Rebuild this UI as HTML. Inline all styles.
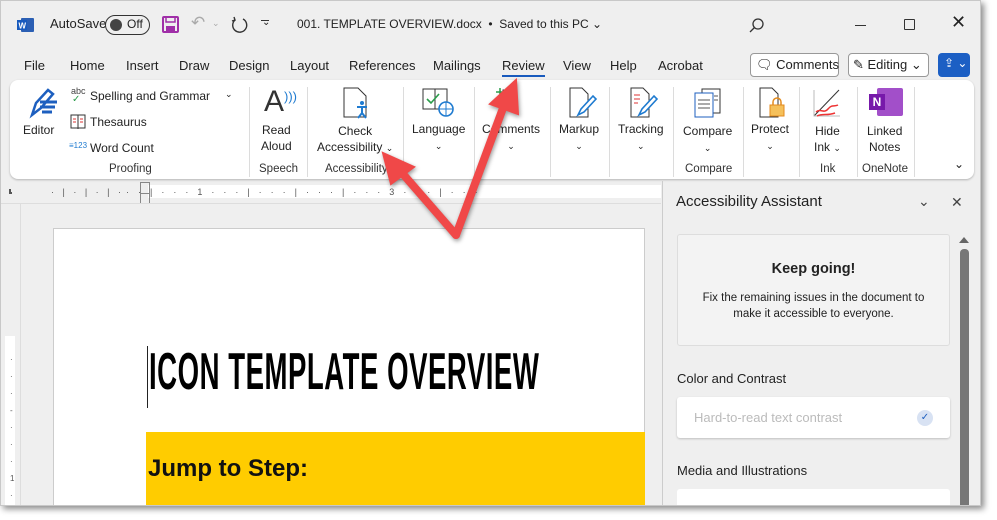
<!DOCTYPE html>
<html><head><meta charset="utf-8"><style>
*{margin:0;padding:0;box-sizing:border-box}
body{width:997px;height:520px;background:#fff;position:relative;overflow:hidden;font-family:"Segoe UI","Liberation Sans",sans-serif;color:#222}
.a{position:absolute;white-space:nowrap}
.win{position:absolute;left:0;top:0;width:981px;height:506px;background:#efefef;box-shadow:3px 3px 6px rgba(0,0,0,.45);border:1px solid #c8c8c8;overflow:hidden}
.t13{font-size:13px}
.t12{font-size:12px}
.sep{position:absolute;top:86px;width:1px;height:90px;background:#dcdcdc}
.lbl{position:absolute;font-size:11.5px;color:#333;text-align:center}
.btn{position:absolute;font-size:12px;text-align:center;line-height:16px;color:#222}
.ch{font-size:9px}
</style></head><body>
<div class="win">
<svg class="a" style="left:16px;top:16px" width="18" height="16"><rect x="4" y="1" width="13" height="14" rx="1" fill="#2b5fb4"/><rect x="0" y="3" width="10" height="10" fill="#185abd"/><text x="1.5" y="11.5" font-size="8" fill="#fff" font-family="Liberation Sans" font-weight="bold">W</text></svg>
<div class="a t13" style="left:49px;top:15px">AutoSave</div>
<div class="a" style="left:104px;top:14px;width:45px;height:20px;border:1.5px solid #333;border-radius:10px"></div>
<div class="a" style="left:109px;top:18px;width:12px;height:12px;border-radius:6px;background:#444"></div>
<div class="a t12" style="left:126px;top:16px">Off</div>
<svg class="a" style="left:161px;top:15px" width="18" height="18"><rect x="1" y="1" width="15" height="15" rx="1" fill="none" stroke="#a02fa8" stroke-width="2"/><rect x="4" y="1" width="9" height="5" fill="none" stroke="#a02fa8" stroke-width="1.5"/><rect x="4" y="10" width="9" height="6" fill="#a02fa8"/></svg>
<div class="a" style="left:190px;top:12px;font-size:17px;color:#aaa">↶</div>
<div class="a" style="left:211px;top:17px;font-size:9px;color:#aaa">⌄</div>
<svg class="a" style="left:228px;top:14px" width="20" height="20"><path d="M14 4 A7 7 0 1 1 6 5" fill="none" stroke="#333" stroke-width="1.4"/><path d="M5 2 L6 5 L3 6" fill="none" stroke="#333" stroke-width="1.4"/></svg>
<div class="a" style="left:261px;top:16px;font-size:10px">⌄</div>
<div class="a" style="left:260px;top:19px;width:8px;height:1px;background:#333"></div>
<div class="a t12" style="left:296px;top:16px">001. TEMPLATE OVERVIEW.docx &nbsp;•&nbsp; Saved to this PC ⌄</div>
<svg class="a" style="left:747px;top:16px" width="18" height="18"><circle cx="10" cy="7" r="5" fill="none" stroke="#333" stroke-width="1.3"/><path d="M6.5 10.5 L2 15" stroke="#333" stroke-width="1.3"/></svg>
<div class="a" style="left:854px;top:24px;width:11px;height:1px;background:#333"></div>
<div class="a" style="left:903px;top:18px;width:11px;height:11px;border:1.3px solid #333;border-radius:1px"></div>
<div class="a" style="left:950px;top:11px;font-size:18px;font-weight:300">✕</div>
<div class="a t13" style="left:23px;top:57px">File</div>
<div class="a t13" style="left:69px;top:57px">Home</div>
<div class="a t13" style="left:125px;top:57px">Insert</div>
<div class="a t13" style="left:178px;top:57px">Draw</div>
<div class="a t13" style="left:228px;top:57px">Design</div>
<div class="a t13" style="left:289px;top:57px">Layout</div>
<div class="a t13" style="left:348px;top:57px">References</div>
<div class="a t13" style="left:432px;top:57px">Mailings</div>
<div class="a t13" style="left:501px;top:57px">Review</div>
<div class="a" style="left:501px;top:74px;width:43px;height:2px;background:#185abd"></div>
<div class="a t13" style="left:562px;top:57px">View</div>
<div class="a t13" style="left:609px;top:57px">Help</div>
<div class="a t13" style="left:657px;top:57px">Acrobat</div>
<div class="a" style="left:749px;top:52px;width:89px;height:24px;border:1px solid #999;border-radius:4px;background:#fff"></div>
<div class="a t13" style="left:755px;top:56px">🗨︎ Comments</div>
<div class="a" style="left:847px;top:52px;width:81px;height:24px;border:1px solid #999;border-radius:4px;background:#fff"></div>
<div class="a t13" style="left:852px;top:56px">✎ Editing ⌄</div>
<div class="a" style="left:937px;top:52px;width:32px;height:24px;border-radius:4px;background:#1c5fc4"></div>
<div class="a" style="left:943px;top:55px;font-size:12px;color:#fff">⇪ ⌄</div>
<div class="a" style="left:9px;top:79px;width:964px;height:99px;background:#fff;border-radius:8px;box-shadow:0 1px 2px rgba(0,0,0,.25)"></div>
<svg class="a" style="left:25px;top:86px" width="34" height="32"><path d="M6 28 L10 16 L22 3 L27 7 L15 21 Z" fill="none" stroke="#1d5fbf" stroke-width="2.5"/><path d="M14 15 h17 M14 20 h15 M16 25 h10" stroke="#1d5fbf" stroke-width="3"/></svg>
<div class="btn" style="left:22px;top:121px">Editor</div>
<div class="a" style="left:70px;top:85px;font-size:9px;color:#444">abc</div>
<div class="a" style="left:71px;top:93px;font-size:10px;color:#2a9d4a">✓</div>
<div class="a t12" style="left:89px;top:88px">Spelling and Grammar</div>
<div class="a ch" style="left:224px;top:88px">⌄</div>
<svg class="a" style="left:69px;top:113px" width="16" height="16"><rect x="1" y="1" width="14" height="13" fill="none" stroke="#333"/><path d="M8 1 v14" stroke="#333"/><path d="M3 5 h3 M3 8 h3 M10 5 h3 M10 8 h3" stroke="#d33"/></svg>
<div class="a t12" style="left:89px;top:114px">Thesaurus</div>
<div class="a" style="left:68px;top:140px;font-size:8px;color:#1f7bd0">≡123</div>
<div class="a t12" style="left:89px;top:140px">Word Count</div>
<div class="lbl" style="left:108px;top:162px">Proofing</div>
<div class="sep" style="left:248px"></div>
<div class="a" style="left:263px;top:84px;font-size:30px;font-weight:300;color:#333">A</div>
<div class="a" style="left:283px;top:88px;font-size:13px;color:#1f7bd0">)))</div>
<div class="btn" style="left:260px;top:121px">Read<br>Aloud</div>
<div class="lbl" style="left:258px;top:162px">Speech</div>
<div class="sep" style="left:306px"></div>
<svg class="a" style="left:341px;top:86px" width="30" height="34"><path d="M2 1 h14 l8 8 v21 h-22 z" fill="#fff" stroke="#333"/><circle cx="20" cy="16" r="2" fill="#1f7bd0"/><path d="M15 20 h10 M20 19 v7 l-4 5 M20 26 l4 5" stroke="#1f7bd0" stroke-width="2" fill="none"/></svg>
<div class="btn" style="left:316px;top:122px">Check<br>Accessibility <span class="ch">⌄</span></div>
<div class="lbl" style="left:324px;top:162px">Accessibility</div>
<div class="sep" style="left:402px"></div>
<svg class="a" style="left:420px;top:86px" width="34" height="32"><path d="M2 2 h24 v20 h-24 z M14 2 v20" fill="none" stroke="#333"/><path d="M6 12 l4 4 l8 -9" stroke="#2a9d4a" stroke-width="1.6" fill="none"/><circle cx="25" cy="22" r="7" fill="#fff" stroke="#1f7bd0" stroke-width="1.6"/><path d="M18 22 h14 M25 15 v14" stroke="#1f7bd0"/></svg>
<div class="btn" style="left:411px;top:120px">Language<br><span class="ch">⌄</span></div>
<div class="sep" style="left:473px"></div>
<svg class="a" style="left:492px;top:86px" width="32" height="30"><rect x="10" y="3" width="14" height="16" fill="none" stroke="#333"/><path d="M3 5 h8 M7 1 v8" stroke="#2a9d4a" stroke-width="1.5"/></svg>
<div class="btn" style="left:481px;top:120px">Comments<br><span class="ch">⌄</span></div>
<div class="sep" style="left:549px"></div>
<svg class="a" style="left:567px;top:86px" width="30" height="32"><path d="M2 1 h12 l6 6 v23 h-18 z" fill="#fff" stroke="#333"/><path d="M10 28 l3 -6 l12 -13 l3 3 l-12 13 z" fill="#fff" stroke="#1f7bd0" stroke-width="1.6"/></svg>
<div class="btn" style="left:558px;top:120px">Markup<br><span class="ch">⌄</span></div>
<div class="sep" style="left:608px"></div>
<svg class="a" style="left:628px;top:86px" width="30" height="32"><path d="M2 1 h12 l6 6 v23 h-18 z" fill="#fff" stroke="#333"/><path d="M5 8 h6 M5 12 h6 M5 16 h4" stroke="#d33"/><path d="M10 28 l3 -6 l12 -13 l3 3 l-12 13 z" fill="#fff" stroke="#1f7bd0" stroke-width="1.6"/></svg>
<div class="btn" style="left:617px;top:120px">Tracking<br><span class="ch">⌄</span></div>
<div class="sep" style="left:672px"></div>
<svg class="a" style="left:692px;top:87px" width="30" height="30"><rect x="9" y="1" width="18" height="24" fill="#fff" stroke="#333"/><rect x="2" y="5" width="18" height="24" fill="#fff" stroke="#1d5fbf"/><path d="M5 12 h12 M5 16 h12 M5 20 h12 M21 8 h4 M21 12 h4" stroke="#555"/></svg>
<div class="btn" style="left:682px;top:122px">Compare<br><span class="ch">⌄</span></div>
<div class="lbl" style="left:684px;top:162px">Compare</div>
<div class="sep" style="left:742px"></div>
<svg class="a" style="left:757px;top:86px" width="30" height="32"><path d="M2 1 h12 l6 6 v23 h-18 z" fill="#fff" stroke="#333"/><path d="M15 18 v-3 a4 4 0 0 1 8 0 v3" fill="none" stroke="#e38a1c" stroke-width="1.5"/><rect x="12" y="18" width="14" height="11" fill="#f5c05a" stroke="#e38a1c"/></svg>
<div class="btn" style="left:750px;top:120px">Protect<br><span class="ch">⌄</span></div>
<div class="sep" style="left:798px"></div>
<svg class="a" style="left:812px;top:87px" width="30" height="30"><path d="M1 28 L26 2" stroke="#333"/><path d="M1 2 v26 h26" fill="none" stroke="#bbb"/><path d="M3 24 c5 -4 8 2 12 -3 s6 -2 10 -4 M4 28 c6 -3 10 0 18 -3" fill="none" stroke="#e33" stroke-width="1.5"/></svg>
<div class="btn" style="left:813px;top:122px">Hide<br>Ink <span class="ch">⌄</span></div>
<div class="lbl" style="left:819px;top:162px">Ink</div>
<div class="sep" style="left:856px"></div>
<div class="a" style="left:876px;top:87px;width:26px;height:28px;background:#a24fc9;border-radius:2px"></div>
<div class="a" style="left:868px;top:93px;width:16px;height:16px;background:#7719aa;color:#fff;font:bold 12px 'Liberation Sans';text-align:center;line-height:16px">N</div>
<div class="btn" style="left:866px;top:122px">Linked<br>Notes</div>
<div class="lbl" style="left:861px;top:162px">OneNote</div>
<div class="sep" style="left:913px"></div>
<div class="a" style="left:953px;top:156px;font-size:12px">⌄</div>
<div class="a" style="left:8px;top:188px;width:3px;height:5px;border-left:2px solid #555;border-bottom:2px solid #555"></div>
<div class="a" style="left:20px;top:184px;width:640px;height:13px;background:#fff"></div>
<div class="a" style="left:20px;top:183px;width:127px;height:14px;background:#efefef"></div>
<div class="a" style="left:50px;top:186px;font-size:9px;color:#555;letter-spacing:8.5px">·|·|·|·</div>
<div class="a" style="left:125px;top:186px;font-size:9px;color:#555;letter-spacing:9px">··|···1···|···|···|···3···|···</div>
<div class="a" style="left:139px;top:181px;width:10px;height:22px;border:1px solid #888"></div>
<div class="a" style="left:139px;top:192px;width:10px;height:1px;background:#888"></div>
<div class="a" style="left:0;top:202px;width:660px;height:1px;background:#ddd"></div>
<div class="a" style="left:19px;top:202px;width:1px;height:304px;background:#ddd"></div>
<div class="a" style="left:4px;top:335px;width:10px;height:171px;background:#fff"></div>
<div class="a" style="left:9px;top:350px;font-size:8px;color:#555;line-height:17px;width:4px">·<br>·<br>·<br>-<br>·<br>·<br>·<br>1<br>·<br>·</div>
<div class="a" style="left:52px;top:227px;width:592px;height:290px;background:#fff;border:1px solid #ccc"></div>
<div class="a" style="left:146px;top:345px;width:1px;height:62px;background:#222"></div>
<div class="a" style="left:148px;top:341px;font-family:'Liberation Sans Narrow','Liberation Sans',sans-serif;font-weight:bold;font-size:52px;color:#000;transform:scaleX(0.53);transform-origin:left;letter-spacing:1px">ICON TEMPLATE OVERVIEW</div>
<div class="a" style="left:145px;top:431px;width:499px;height:80px;background:#ffcc00"></div>
<div class="a" style="left:147px;top:454px;font-family:'Liberation Sans',sans-serif;font-weight:bold;font-size:24px;color:#111">Jump to Step:</div>
<div class="a" style="left:661px;top:180px;width:1px;height:330px;background:#ccc"></div>
<div class="a" style="left:675px;top:192px;font-size:15px;color:#222">Accessibility Assistant</div>
<div class="a" style="left:917px;top:192px;font-size:14px;color:#444">⌄</div>
<div class="a" style="left:950px;top:193px;font-size:14px;color:#444">✕</div>
<div class="a" style="left:676px;top:233px;width:273px;height:112px;background:#f3f3f3;border:1px solid #ddd;border-radius:3px"></div>
<div class="a" style="left:676px;top:260px;width:273px;text-align:center;font-size:14.5px;font-weight:bold;color:#222">Keep going!</div>
<div class="a" style="left:676px;top:289px;width:273px;text-align:center;font-size:11.5px;line-height:16px;color:#222;white-space:normal">Fix the remaining issues in the document to<br>make it accessible to everyone.</div>
<div class="a" style="left:676px;top:370px;font-size:13px;color:#222">Color and Contrast</div>
<div class="a" style="left:676px;top:396px;width:273px;height:41px;background:#fff;border-radius:3px;box-shadow:0 1px 2px rgba(0,0,0,.2)"></div>
<div class="a" style="left:693px;top:409px;font-size:13px;color:#bbb">Hard-to-read text contrast</div>
<div class="a" style="left:916px;top:409px;width:16px;height:16px;border-radius:8px;background:#d8e2f3;color:#1d5fbf;font-size:10px;text-align:center;line-height:16px">✓</div>
<div class="a" style="left:676px;top:462px;font-size:13px;color:#222">Media and Illustrations</div>
<div class="a" style="left:676px;top:488px;width:273px;height:30px;background:#fff;border-radius:3px"></div>
<div class="a" style="left:958px;top:236px;width:0;height:0;border-left:5px solid transparent;border-right:5px solid transparent;border-bottom:6px solid #666"></div>
<div class="a" style="left:959px;top:248px;width:9px;height:262px;background:#777;border-radius:4px"></div>
</div>
<svg class="a" style="left:0;top:0" width="997" height="520">
<g stroke="#f04848" stroke-width="8" stroke-linecap="round" fill="#f04848" style="filter:drop-shadow(1px 2px 2px rgba(0,0,0,.4))">
<path d="M456 235 L396 166" fill="none"/>
<path d="M456 235 L506 100" fill="none"/>
<polygon stroke-width="2" points="383,153 414,167 391,184"/>
<polygon stroke-width="2" points="516,80 490,104 518,114"/>
</g>
</svg>
</body></html>
